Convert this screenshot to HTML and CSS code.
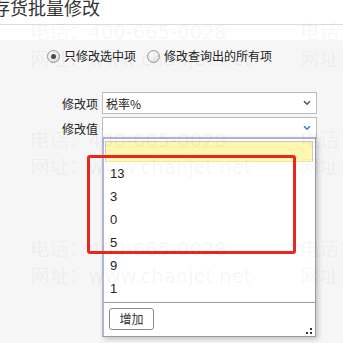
FILE: index.html
```html
<!DOCTYPE html>
<html>
<head>
<meta charset="utf-8">
<link rel="stylesheet" href="styles.css">
</head>
<body>
<div class="page">
  <div class="header"><h1 class="title">存货批量修改</h1></div>
  <div class="band"></div>
  <div class="content">
    <div class="radios">
      <label class="radio-opt"><span class="radio checked"></span><span>只修改选中项</span></label>
      <label class="radio-opt"><span class="radio"></span><span>修改查询出的所有项</span></label>
    </div>
    <div class="row">
      <span class="lbl">修改项</span>
      <div class="select"><span class="val">税率%</span>
        <svg class="chev" width="8" height="6" viewBox="0 0 8 6"><path d="M1 1.2 L4 4.2 L7 1.2" fill="none" stroke="#555" stroke-width="1.6"/></svg>
      </div>
    </div>
    <div class="row">
      <span class="lbl">修改值</span>
      <div class="select"><span class="val"></span>
        <svg class="chev" width="8" height="6" viewBox="0 0 8 6"><path d="M1 1.2 L4 4.2 L7 1.2" fill="none" stroke="#3f7bd9" stroke-width="1.6"/></svg>
      </div>
    </div>
  </div>

  <div class="dropdown">
    <div class="search"></div>
    <ul class="list">
      <li>13</li>
      <li>3</li>
      <li>0</li>
      <li>5</li>
      <li>9</li>
      <li>1</li>
    </ul>
    <div class="footer">
      <button class="btn">增加</button>
      <svg class="grip" width="6" height="6" viewBox="0 0 6 6"><rect x="4" y="0" width="2" height="2" fill="#333"/><rect x="0" y="4" width="2" height="2" fill="#333"/><rect x="4" y="4" width="2" height="2" fill="#333"/></svg>
    </div>
  </div>

  <div class="highlight"></div>

  <div class="watermark">
    <div class="wm wm1"><div>电话：400-665-0028</div><div>网址：www.chanjet.net</div></div>
    <div class="wm wm2"><div>电话：400-665-0028</div><div>网址：www.chanjet.net</div></div>
    <div class="wm wm3"><div>电话：400-665-0028</div><div>网址：www.chanjet.net</div></div>
    <div class="wm wm4"><div>电话：400-665-0028</div><div>网址：www.chanjet.net</div></div>
    <div class="wm wm5"><div>电话：400-665-0028</div><div>网址：www.chanjet.net</div></div>
    <div class="wm wm6"><div>电话：400-665-0028</div><div>网址：www.chanjet.net</div></div>
  </div>
</div>
</body>
</html>
```
FILE: styles.css
```css
html, body {
  margin: 0;
  padding: 0;
}
body {
  width: 343px;
  height: 343px;
  overflow: hidden;
  background: #f6f6f6;
  font-family: "Noto Sans CJK SC", "Liberation Sans", sans-serif;
  color: #333;
}
.page {
  position: relative;
  width: 343px;
  height: 343px;
  overflow: hidden;
}
.header {
  height: 24px;
  background: #fff;
  border-bottom: 1px solid #dcdcdc;
  overflow: hidden;
}
.title {
  margin: -4px 0 0 -8px;
  font-size: 18px;
  line-height: 22px;
  font-weight: normal;
  color: #333;
  white-space: nowrap;
}
.band {
  height: 15px;
  background: #fff;
}
.content {
  padding: 9px 0 0 0;
}
.radios {
  display: flex;
  align-items: center;
  padding-left: 47px;
  gap: 11px;
  height: 14px;
  font-size: 12px;
  line-height: 14px;
  color: #222;
}
.radio-opt {
  display: flex;
  align-items: center;
  gap: 4px;
}
.radio {
  width: 11px;
  height: 11px;
  border-radius: 50%;
  border: 1px solid #9a9a9a;
  background: radial-gradient(circle at 40% 35%, #ffffff 0%, #e6e6e6 60%, #c9c9c9 100%);
  position: relative;
  box-sizing: content-box;
}
.radio.checked::after {
  content: "";
  position: absolute;
  left: 3px;
  top: 3px;
  width: 5px;
  height: 5px;
  border-radius: 50%;
  background: #4a4a4a;
}
.row {
  display: flex;
  align-items: center;
  height: 22px;
  margin-top: 3px;
  font-size: 12px;
}
.radios + .row {
  margin-top: 29px;
}
.lbl {
  width: 40px;
  padding-left: 62px;
  color: #222;
}
.select {
  box-sizing: border-box;
  width: 215px;
  height: 22px;
  border: 1px solid #bdbdbd;
  background: #fff;
  display: flex;
  align-items: center;
  justify-content: space-between;
  padding: 0 5px 0 3px;
}
.val {
  font-size: 12px;
  color: #222;
}
.chev {
  display: block;
}
.dropdown {
  position: absolute;
  left: 102px;
  top: 137px;
  width: 214px;
  height: 200px;
  box-sizing: border-box;
  background: #fff;
  border: 1px solid #9a9a9a;
  border-left: 2px solid #b4b4d6;
  border-top: 2px solid #b4b4d0;
  box-shadow: 2px 2px 5px rgba(0,0,0,0.22);
  display: flex;
  flex-direction: column;
}
.search {
  margin: 2px 2px 0 1px;
  height: 21px;
  box-sizing: border-box;
  background: #fff6b0;
  border: 1px solid #c8c8c8;
  border-bottom-color: #f0e6a0;
}
.list {
  list-style: none;
  margin: 0;
  padding: 0;
  font-family: "Liberation Sans", Arial, sans-serif;
  font-size: 13px;
  color: #222;
}
.list li {
  height: 23px;
  line-height: 23px;
  padding-left: 6px;
}
.footer {
  margin-top: 2px;
  border-top: 1px solid #9a9a9a;
  flex: 1;
  position: relative;
  display: flex;
  align-items: flex-start;
  padding: 5px 0 0 5px;
}
.btn {
  width: 45px;
  height: 22px;
  padding: 0;
  border: 1px solid #8a8a8a;
  border-radius: 3px;
  background: #fff;
  font-family: "Noto Sans CJK SC", sans-serif;
  font-size: 12px;
  color: #333;
  line-height: 20px;
}
.grip {
  position: absolute;
  right: 3px;
  bottom: 2px;
}
.highlight {
  position: absolute;
  left: 87px;
  top: 155px;
  width: 209px;
  height: 99px;
  box-sizing: border-box;
  border: 3px solid #e8281c;
  border-radius: 3px;
}
.watermark {
  position: absolute;
  inset: 0;
  pointer-events: none;
}
.wm {
  position: absolute;
  font-family: "DejaVu Sans", "Noto Sans CJK SC", sans-serif;
  font-size: 19.5px;
  line-height: 27px;
  color: rgba(0,0,0,0.055);
  white-space: nowrap;
}
.wm1 { left: 30px; top: 19px; }
.wm2 { left: 300px; top: 19px; }
.wm3 { left: 30px; top: 127px; }
.wm4 { left: 300px; top: 127px; }
.wm5 { left: 30px; top: 236px; }
.wm6 { left: 300px; top: 236px; }
```
